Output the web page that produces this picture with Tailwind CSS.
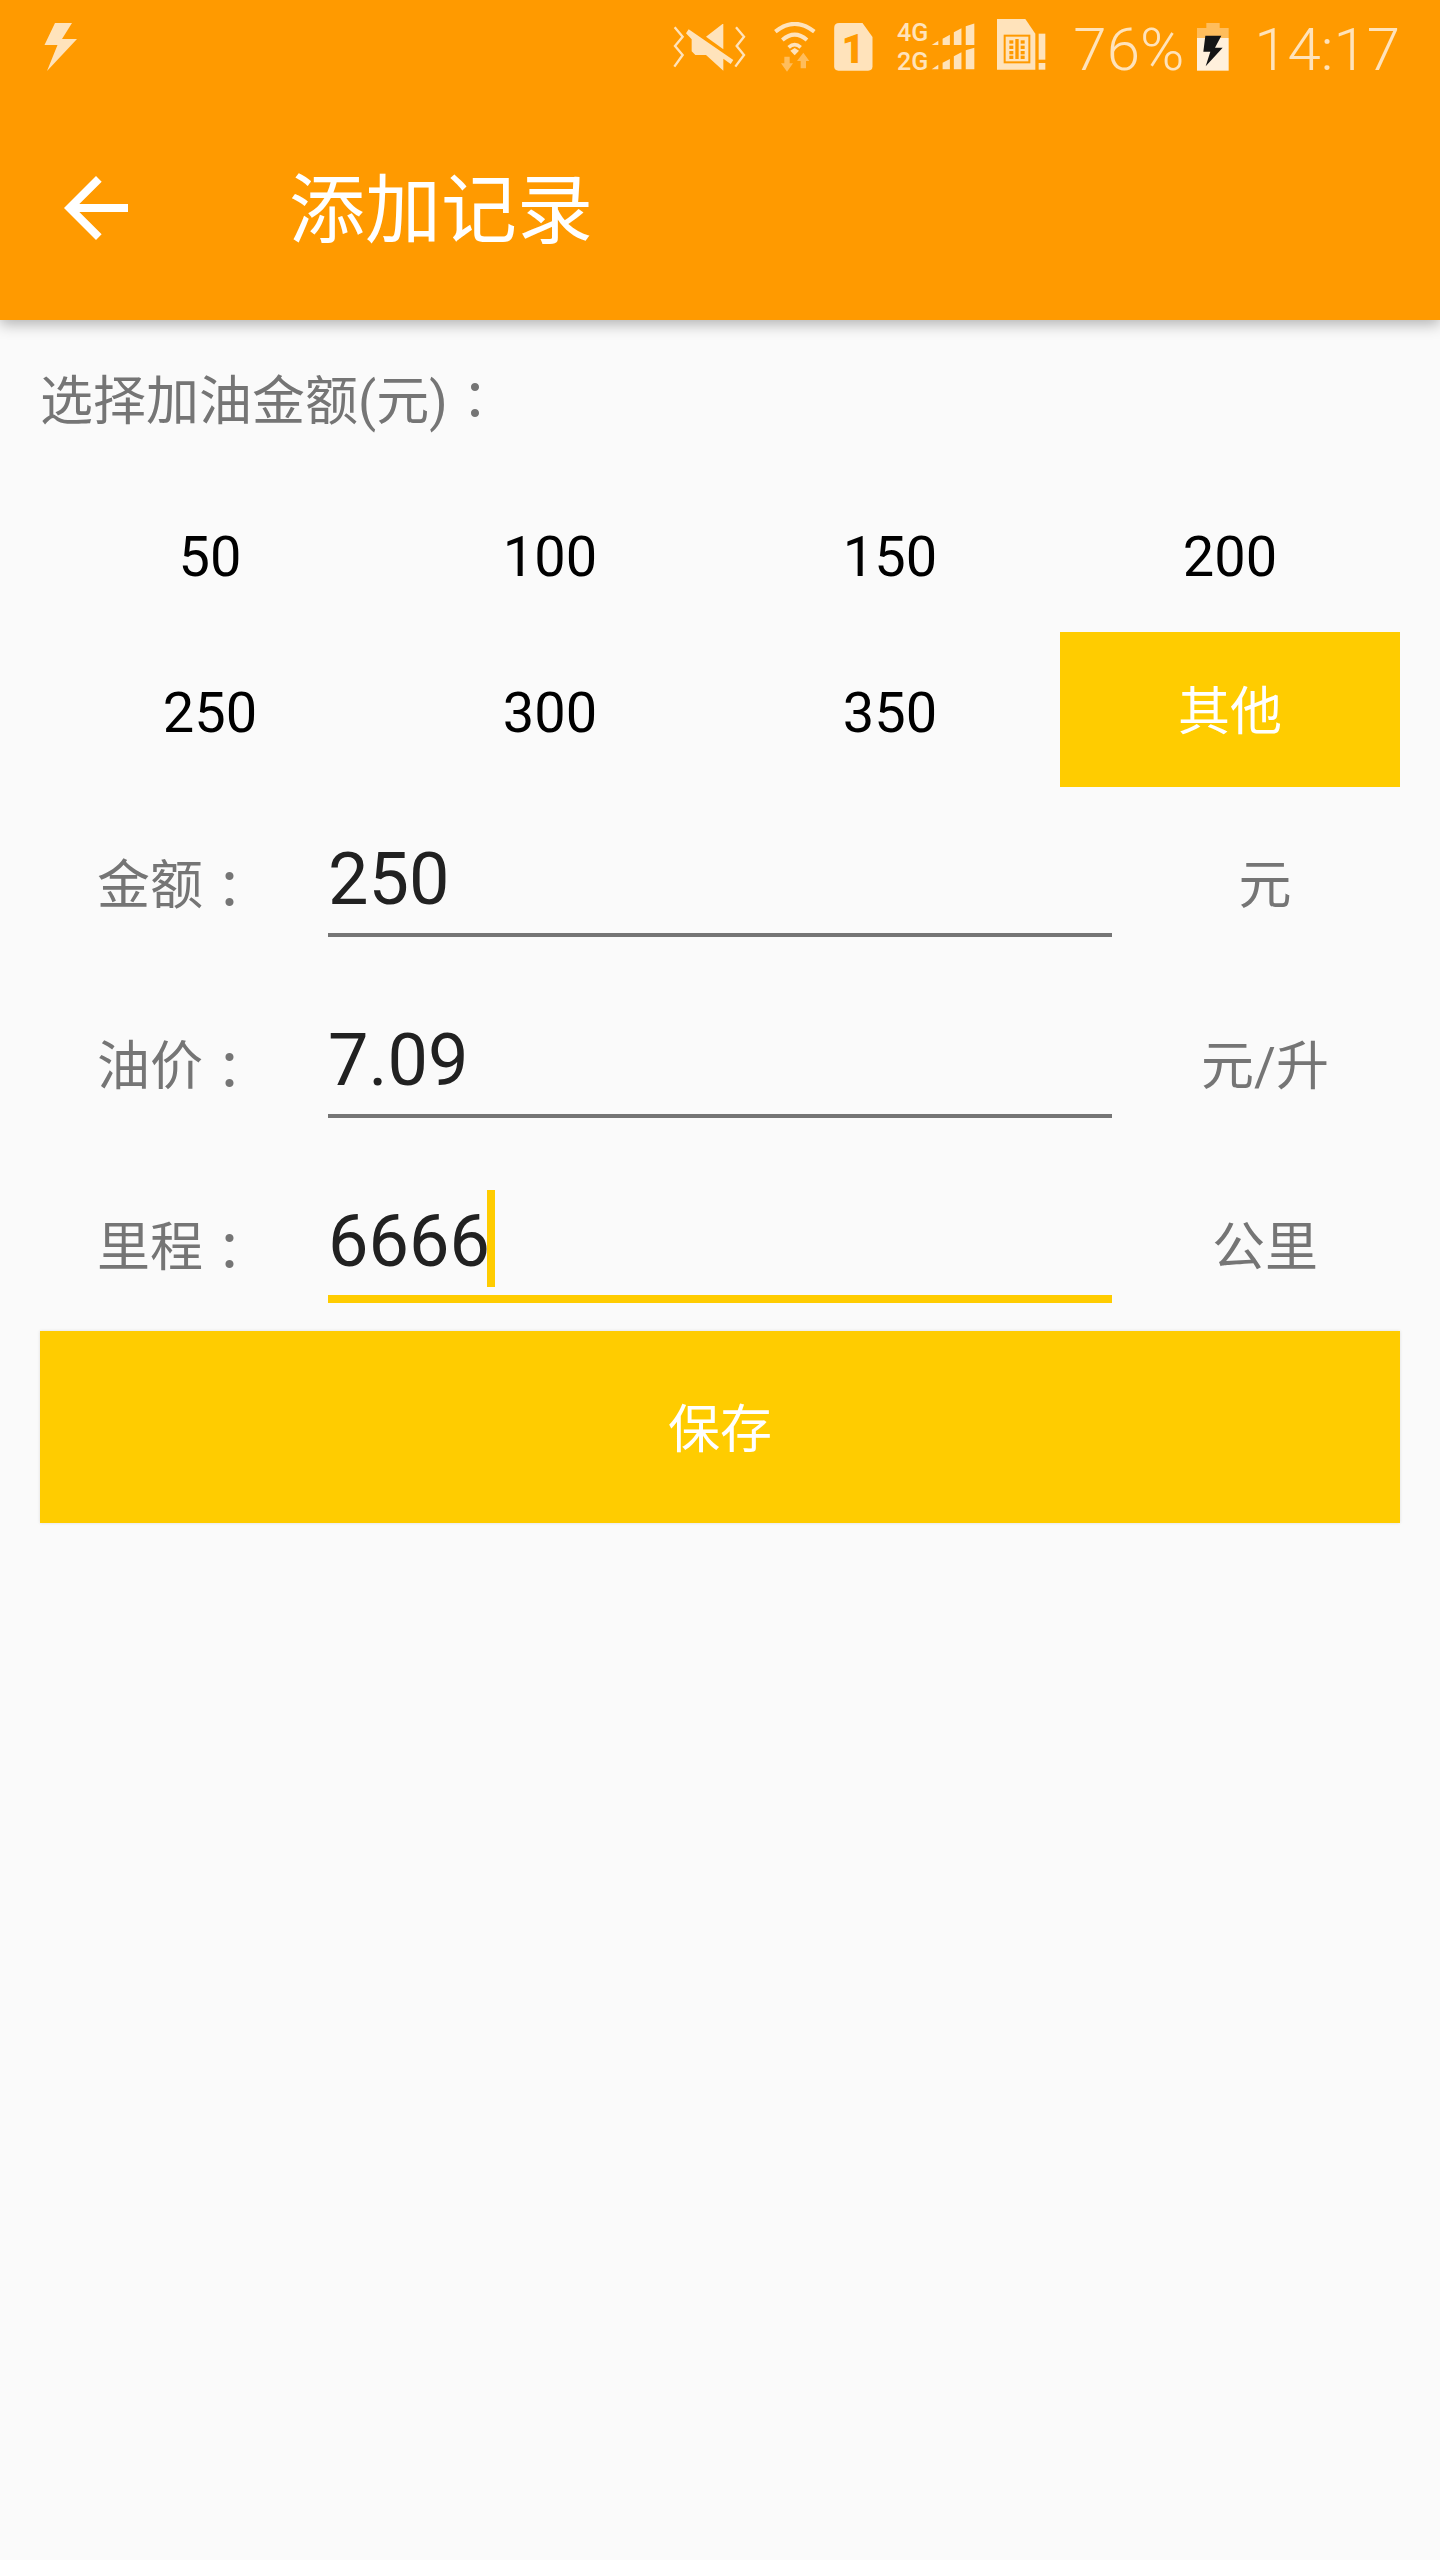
<!DOCTYPE html>
<html lang="zh-CN">
<head>
  <meta charset="UTF-8" />
  <meta name="viewport" content="width=device-width, initial-scale=1.0"/>
  <title>添加记录</title>
  <script src="https://cdn.jsdelivr.net/npm/@tailwindcss/browser@4"></script>
</head>
<body class="bg-[#fafafa] h-[2560px] overflow-hidden font-[Roboto,'Noto_Sans_CJK_SC',sans-serif]">

  <!-- Toolbar with status bar -->
  <header class="relative z-10 bg-[#ff9a00] h-[320px] shadow-[0_4px_14px_rgba(0,0,0,0.3)]">
    <div class="h-[96px] flex items-start text-[#ffe3bb]">
      <svg class="ml-[44px] mt-[23px] w-[33px] h-[48px]" viewBox="44 23 33 48" fill="#ffe3bb">
        <polygon points="55,23 72,23 62,39 77,39 47,71 57.5,45 44.5,45"/>
      </svg>

      <div class="ml-auto flex items-start pr-[40px]">
        <!-- vibrate -->
        <svg class="mt-[24px] w-[74px] h-[48px]" viewBox="36 42 222 144">
          <polyline points="44,52 68,80 45,108 68,135 43,170" fill="none" stroke="#ffe3bb" stroke-width="7"/>
          <polyline points="228,52 252,80 230,108 252,135 226,170" fill="none" stroke="#ffe3bb" stroke-width="7"/>
          <polygon points="190,40 190,118 138,80" fill="#ffe3bb"/>
          <polygon points="86,58 220,150 212,162 190,146 190,182 138,135 106,135 95,124 95,88 78,70" fill="#ffe3bb"/>
        </svg>
        <!-- wifi -->
        <svg class="ml-[27px] mt-[22px] w-[44px] h-[50px]" viewBox="338 36 132 150">
          <path d="M345 65 Q403 18 462 65" fill="none" stroke="#ffe3bb" stroke-width="12"/>
          <path d="M366 90 Q403 58 440 90" fill="none" stroke="#ffe3bb" stroke-width="12"/>
          <path d="M385 112 Q403 96 421 112" fill="none" stroke="#ffe3bb" stroke-width="11"/>
          <polygon points="403,136 390,122 403,114 416,122" fill="#ffe3bb"/>
          <polygon points="372,140 388,140 388,160 398,160 380,185 362,160 372,160" fill="#ffbd5c"/>
          <polygon points="429,128 447,153 437,153 437,175 421,175 421,153 410,153" fill="#ffbd5c"/>
        </svg>
        <!-- sim 1 -->
        <svg class="ml-[17px] mt-[23px] w-[39px] h-[48px] overflow-visible" viewBox="523 40 116 144">
          <path d="M538 40 H608 L638 82 V170 Q638 183 625 183 H536 Q523 183 523 170 V55 Q523 40 538 40 Z" fill="#ffe3bb"/>
          <text x="580" y="160" text-anchor="middle" font-family="Roboto" font-weight="900" font-size="120" fill="#ff9a00">1</text>
        </svg>
        <!-- 4G 2G signal -->
        <svg class="ml-[24px] mt-[22px] w-[78px] h-[50px] overflow-visible" viewBox="710 36 236 150">
          <text x="710" y="92" font-family="Roboto" font-weight="500" font-size="76" fill="#ffe3bb">4G</text>
          <text x="710" y="182" font-family="Roboto" font-weight="500" font-size="76" fill="#ffe3bb">2G</text>
          <g fill="#ffe3bb">
            <polygon points="815,105 835,92 835,105"/>
            <polygon points="848,86 870,74 870,105 848,105"/>
            <polygon points="882,66 905,54 905,105 882,105"/>
            <polygon points="918,48 944,40 944,105 918,105"/>
            <polygon points="815,178 835,165 835,178"/>
            <polygon points="848,159 870,147 870,178 848,178"/>
            <polygon points="882,139 905,127 905,178 882,178"/>
            <polygon points="918,121 944,113 944,178 918,178"/>
          </g>
        </svg>
        <!-- sim 2 not available -->
        <svg class="ml-[22px] mt-[19px] w-[49px] h-[52px]" viewBox="50 28 147 156">
          <polygon points="50,28 135,28 165,72 165,180 50,180" fill="#ffe3bb"/>
          <rect x="73" y="78" width="74" height="80" fill="none" stroke="#ff9a00" stroke-width="6"/>
          <g fill="#ff9a00">
            <rect x="87" y="92" width="12" height="10"/><rect x="87" y="108" width="12" height="10"/><rect x="87" y="124" width="12" height="10"/><rect x="87" y="138" width="12" height="10"/>
            <rect x="105" y="88" width="10" height="60"/>
            <rect x="121" y="92" width="12" height="10"/><rect x="121" y="108" width="12" height="10"/><rect x="121" y="124" width="12" height="10"/><rect x="121" y="138" width="12" height="10"/>
          </g>
          <rect x="175" y="72" width="20" height="78" fill="#ffe3bb"/>
          <rect x="175" y="160" width="20" height="20" fill="#ffe3bb"/>
        </svg>
        <span class="ml-[27px] mt-[20px] text-[60px] leading-[60px] font-light">76%</span>
        <!-- battery -->
        <svg class="ml-[13px] mt-[23px] w-[32px] h-[48px]" viewBox="652 40 96 144">
          <rect x="680" y="40" width="40" height="16" fill="#ffbd5c"/>
          <rect x="652" y="55" width="95" height="30" fill="#ffbd5c"/>
          <rect x="652" y="85" width="95" height="98" fill="#fff0dc"/>
          <polygon points="677,78 725,78 706,114 729,114 678,170 692,126 671,126" fill="#151515"/>
        </svg>
        <span class="ml-[25px] mt-[20px] text-[60px] leading-[60px] font-light">14:17</span>
      </div>
    </div>

    <div class="h-[224px] flex items-center">
      <svg class="ml-[64px] w-[64px] h-[64px]" viewBox="4 4 16 16" fill="#fff">
        <path d="M20 11H7.83l5.59-5.59L12 4l-8 8 8 8 1.41-1.41L7.83 13H20v-2z"/>
      </svg>
      <h1 class="ml-[161px] pt-[5px] text-[76px] leading-[90px] font-normal text-white">添加记录</h1>
    </div>
  </header>

  <main class="px-[40px]">
    <div class="h-[157px] pt-[45px] text-[53px] leading-[64px] text-[#757575]">选择加油金额(元)<span class="inline-block ml-[1px] w-[53px] text-center font-['Noto_Sans_CJK_TC',sans-serif]">：</span></div>

    <div class="grid grid-cols-4 auto-rows-[155px] text-[56px] text-black text-center">
      <div class="flex items-center justify-center pt-[4px]">50</div>
      <div class="flex items-center justify-center pt-[4px]">100</div>
      <div class="flex items-center justify-center pt-[4px]">150</div>
      <div class="flex items-center justify-center pt-[4px]">200</div>
      <div class="flex items-center justify-center pt-[6px]">250</div>
      <div class="flex items-center justify-center pt-[6px]">300</div>
      <div class="flex items-center justify-center pt-[6px]">350</div>
      <div class="flex items-center justify-center pt-[7px] bg-[#ffcc00] text-white text-[52px]">其他</div>
    </div>

    <div class="h-[1px]"></div>

    <div class="flex h-[181px]">
      <div class="w-[288px] pl-[57px] pt-[16px] flex items-center text-[53px] text-[#757575]">金额<span class="font-['Noto_Sans_CJK_TC',sans-serif]">：</span></div>
      <div class="w-[784px] flex flex-col">
        <div class="h-[149px] border-b-4 border-[#757575] pt-[50px] text-[72px] leading-[84px] text-[#212121]">250</div>
      </div>
      <div class="flex-1 ml-[18px] pt-[16px] flex items-center justify-center text-[53px] text-[#757575]">元</div>
    </div>

    <div class="flex h-[181px]">
      <div class="w-[288px] pl-[57px] pt-[16px] flex items-center text-[53px] text-[#757575]">油价<span class="font-['Noto_Sans_CJK_TC',sans-serif]">：</span></div>
      <div class="w-[784px] flex flex-col">
        <div class="h-[149px] border-b-4 border-[#757575] pt-[50px] text-[72px] leading-[84px] text-[#212121]">7.09</div>
      </div>
      <div class="flex-1 ml-[18px] pt-[16px] flex items-center justify-center text-[53px] text-[#757575]">元/升</div>
    </div>

    <div class="flex h-[181px]">
      <div class="w-[288px] pl-[57px] pt-[16px] flex items-center text-[53px] text-[#757575]">里程<span class="font-['Noto_Sans_CJK_TC',sans-serif]">：</span></div>
      <div class="w-[784px] flex flex-col">
        <div class="relative h-[153px] border-b-8 border-[#ffcc00] pt-[50px] text-[72px] leading-[84px] text-[#212121]">
          6666
          <span class="absolute left-[159px] top-[40px] w-[8px] h-[97px] bg-[#ffcc00]"></span>
        </div>
      </div>
      <div class="flex-1 ml-[18px] pt-[16px] flex items-center justify-center text-[53px] text-[#757575]">公里</div>
    </div>

    <button class="w-full h-[192px] pt-[7px] bg-[#ffcc00] text-white text-[52px] shadow-[0_0_3px_rgba(0,0,0,0.12)]">保存</button>
  </main>

</body>
</html>
